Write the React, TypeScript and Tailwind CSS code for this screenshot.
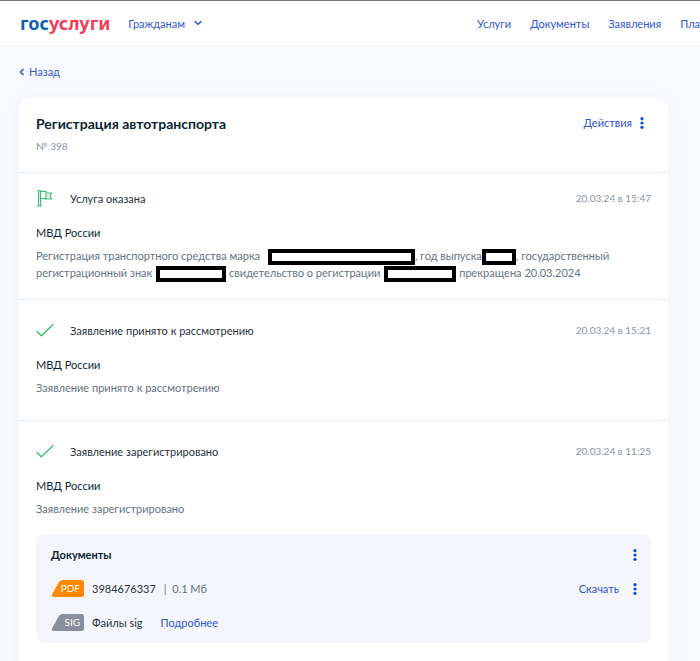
import type { ReactNode } from "react";

const NAV_LINKS = ["Услуги", "Документы", "Заявления", "Платежи"];

function Logo() {
  return (
    <a
      href="#"
      className="font-['Noto_Sans'] text-[18px] leading-6 font-bold text-[#0b63b0]"
    >
      гос<span className="text-[#ee3f58]">услуги</span>
    </a>
  );
}

function Header() {
  return (
    <header className="flex h-[47px] items-center overflow-hidden border-t border-b border-t-[#77787a] border-b-[#edf2fa] bg-white pb-px pl-5">
      <Logo />
      <button type="button" className="ml-[18px] flex items-center gap-2">
        Гражданам
        <svg width="10" height="6" viewBox="0 0 10 6" fill="none">
          <path d="M1.800 1.200 5 4.400l3.200-3.200" stroke="#0d4cd3" strokeWidth="1.3" />
        </svg>
      </button>
      <nav className="-mr-[26px] ml-auto flex gap-[19px]">
        {NAV_LINKS.map((link) => (
          <a key={link} href="#">
            {link}
          </a>
        ))}
      </nav>
    </header>
  );
}

function Dots() {
  return (
    <svg width="4" height="12" viewBox="0 0 4 12" fill="#0d4cd3">
      <circle cx="2" cy="1.7" r="1.6" />
      <circle cx="2" cy="6" r="1.6" />
      <circle cx="2" cy="10.3" r="1.6" />
    </svg>
  );
}

function FlagIcon() {
  return (
    <svg
      width="18"
      height="18"
      viewBox="0 0 18 18"
      fill="none"
      stroke="#2fc26e"
      strokeWidth="1.1"
    >
      <path d="M2.500 17V1.500h2V17M1 17h5M4.500 2.500h5.500v7H4.500M10 4h5.500l-1.500 3 1.500 3H8.500V9.500" />
    </svg>
  );
}

function CheckIcon() {
  return (
    <svg width="18" height="18" viewBox="0 0 18 18" fill="none">
      <path d="m.6 10.200 4.800 4.600L17.300 3.200" stroke="#2fc26e" strokeWidth="1.2" />
    </svg>
  );
}

function Redacted({ className }: { className: string }) {
  return (
    <span
      className={`-my-1 inline-block h-4 border-4 border-black bg-white align-middle ${className}`}
    />
  );
}

interface StatusProps {
  icon: ReactNode;
  title: string;
  date: string;
  className: string;
  children: ReactNode;
}

function Status({ icon, title, date, className, children }: StatusProps) {
  return (
    <section className={`border-t border-[#e4ecf7] px-[17px] ${className}`}>
      <div className="flex items-center">
        <span className="w-[34px]">{icon}</span>
        <h2 className="flex-1 text-[#26323e]">{title}</h2>
        <time className="text-[10px] text-[#8b95a3]">{date}</time>
      </div>
      <h3 className="mt-[17px] text-[#0b1f33]">МВД России</h3>
      <div className="mt-[6px] text-[#66727f]">{children}</div>
    </section>
  );
}

function FileBadge({ label, color }: { label: string; color: string }) {
  return (
    <span className="relative mr-2 flex h-[17px] w-[33px] items-center justify-end pr-1 text-[10px] text-white">
      <svg
        className="absolute inset-0"
        width="33"
        height="17"
        viewBox="0 0 33 17"
        fill={color}
      >
        <path d="M12 0h18.500A2.500 2.500 0 0 1 33 2.500v12a2.500 2.500 0 0 1-2.500 2.500H3C1 17 .2 15.700 1.200 14L7.500 2.800C8.500.9 10 0 12 0Z" />
      </svg>
      <span className="relative">{label}</span>
    </span>
  );
}

function Documents() {
  return (
    <div className="mt-[17px] rounded-lg bg-[#f4f6fb] py-3 pr-[14px] pl-[15px] text-[#26323e]">
      <div className="flex items-center justify-between">
        <h4 className="font-bold text-[#0b1f33]">Документы</h4>
        <button type="button" aria-label="Меню документов">
          <Dots />
        </button>
      </div>
      <div className="mt-[17px] flex items-center">
        <FileBadge label="PDF" color="#ff8a00" />
        3984676337
        <span className="ml-2 text-[#66727f]">|&nbsp; 0.1 Мб</span>
        <a href="#" className="ml-auto text-[#2f55d4]">
          Скачать
        </a>
        <button type="button" aria-label="Меню файла" className="ml-[14px]">
          <Dots />
        </button>
      </div>
      <div className="mt-[17px] flex items-center">
        <FileBadge label="SIG" color="#87909c" />
        Файлы sig
        <a href="#" className="ml-[18px] text-[#2f55d4]">
          Подробнее
        </a>
      </div>
    </div>
  );
}

export default function App() {
  return (
    <div className="min-h-screen overflow-hidden bg-[#fafbff] font-[Lato,sans-serif] text-[11px] leading-[17px] text-[#2f55d4]">
      <Header />
      <main className="pr-8 pl-[19px]">
        <a href="#" className="mt-4 flex items-center gap-1">
          <svg width="6" height="8" viewBox="0 0 6 8" fill="none">
            <path d="M4.500 1 1.500 4l3 3" stroke="#0d4cd3" strokeWidth="1.3" />
          </svg>
          Назад
        </a>

        <article className="mt-[18px] rounded-xl bg-white pb-12 shadow-[0_0_20px_rgba(60,90,200,0.06)]">
          <div className="flex items-start justify-between px-[17px] pt-4 pb-[17px]">
            <div>
              <h1 className="text-[14px] leading-5 font-bold text-[#0b1f33]">
                Регистрация автотранспорта
              </h1>
              <p className="mt-1 text-[10px] text-[#8b95a3]">№ 398</p>
            </div>
            <button type="button" className="flex items-center gap-2 pr-[7px]">
              Действия
              <Dots />
            </button>
          </div>

          <Status
            icon={<FlagIcon />}
            title="Услуга оказана"
            date="20.03.24 в 15:47"
            className="pt-4 pb-[18px]"
          >
            Регистрация транспортного средства марка
            <Redacted className="ml-2 w-[147px]" />, год выпуска
            <Redacted className="w-[34px]" />, государственный
            <br />
            регистрационный знак
            <Redacted className="ml-1 w-[70px]" /> свидетельство о регистрации
            <Redacted className="ml-1 w-[72px]" /> прекращена 20.03.2024
          </Status>
          <Status
            icon={<CheckIcon />}
            title="Заявление принято к рассмотрению"
            date="20.03.24 в 15:21"
            className="pt-[21px] pb-6"
          >
            Заявление принято к рассмотрению
          </Status>
          <Status
            icon={<CheckIcon />}
            title="Заявление зарегистрировано"
            date="20.03.24 в 11:25"
            className="pt-[21px]"
          >
            Заявление зарегистрировано
            <Documents />
          </Status>
        </article>
      </main>
    </div>
  );
}
